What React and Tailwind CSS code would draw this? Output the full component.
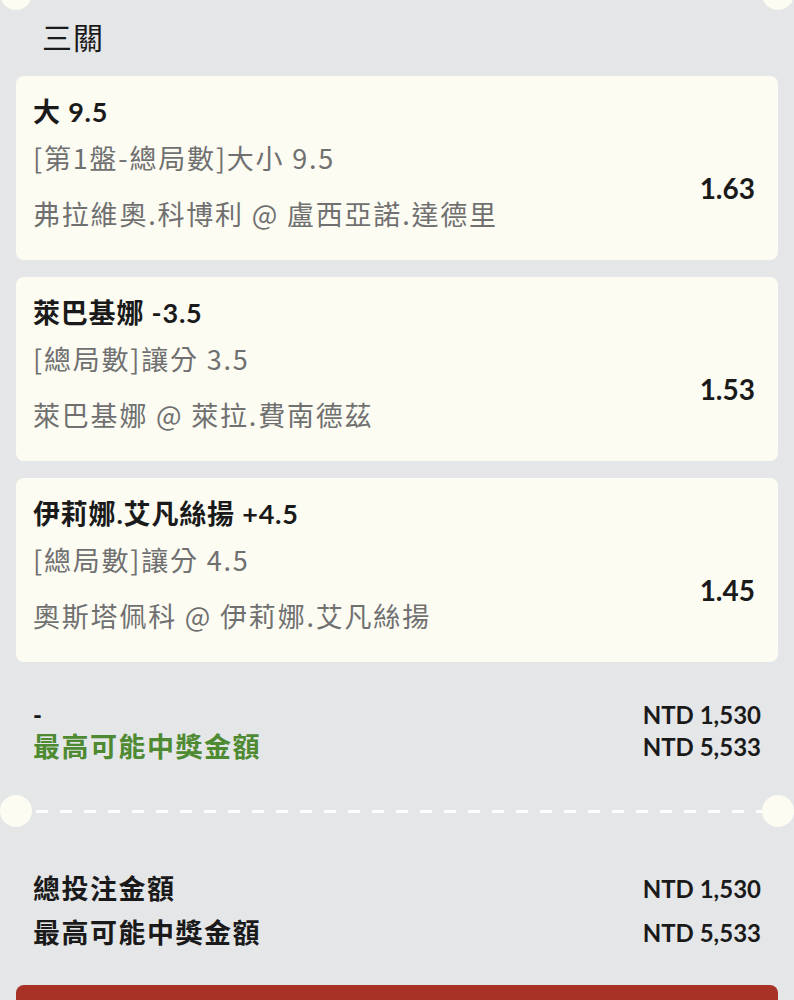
import React from 'react';

const bets = [
  { title: '大 9.5', market: '[第1盤-總局數]大小 9.5', match: '弗拉維奧.科博利 @ 盧西亞諾.達德里', odds: '1.63' },
  { title: '萊巴基娜 -3.5', market: '[總局數]讓分 3.5', match: '萊巴基娜 @ 萊拉.費南德茲', odds: '1.53' },
  { title: '伊莉娜.艾凡絲揚 +4.5', market: '[總局數]讓分 4.5', match: '奧斯塔佩科 @ 伊莉娜.艾凡絲揚', odds: '1.45' },
];

const Divider = ({ className = '' }) => (
  <div className={`flex items-center h-8 ${className}`}>
    <div className="w-8 h-8 rounded-full bg-[#fcfcf3] shrink-0" />
    <div className="flex-1 ml-1 h-[3px] bg-[repeating-linear-gradient(to_right,#ffffff_0_12px,transparent_12px_24px)]" />
    <div className="w-8 h-8 rounded-full bg-[#fcfcf3] shrink-0" />
  </div>
);

export default function App() {
  return (
    <div className="w-[794px] h-[1000px] overflow-hidden bg-[#e5e6e8] text-[#1a1a1a] font-['Lato','Noto_Sans_CJK_TC',sans-serif]">
      <Divider className="-mt-[22px]" />

      <h2 className="pl-[42px] mt-[9px] text-[30px] leading-[36px] font-normal tracking-[1px]">三關</h2>

      {/* Bet cards */}
      <div className="mt-[21px] px-4 flex flex-col gap-[17px]">
        {bets.map((b) => (
          <div key={b.title} className="h-[184px] rounded-lg bg-[#fcfcf3] pl-[17px] pr-[23px] pt-[20px] flex justify-between">
            <div className="flex flex-col">
              <div className="text-[27px] leading-[32px] font-bold tracking-[0.8px]">{b.title}</div>
              <div className="mt-[14px] text-[27px] leading-[32px] text-[#707070] tracking-[1.8px] font-['Noto_Sans_CJK_TC',sans-serif]">{b.market}</div>
              <div className="mt-[24px] text-[27px] leading-[32px] text-[#707070] tracking-[1.8px] font-['Noto_Sans_CJK_TC',sans-serif]">{b.match}</div>
            </div>
            <div className="mt-[74px] text-[28px] leading-[36px] font-bold">{b.odds}</div>
          </div>
        ))}
      </div>

      {/* Selection summary */}
      <div className="mt-[37px] px-[33px] flex justify-between">
        <div className="flex flex-col">
          <span className="text-[24px] leading-[32px] font-black">-</span>
          <span className="text-[27px] leading-[32px] font-bold text-[#4e8a32] tracking-[1.5px]">最高可能中獎金額</span>
        </div>
        <div className="flex flex-col items-end text-[24px] leading-[32px] font-bold">
          <span>NTD 1,530</span>
          <span>NTD 5,533</span>
        </div>
      </div>

      <Divider className="mt-[32px]" />

      {/* Totals */}
      <div className="mt-[46px] px-[33px] flex flex-col gap-[12px] font-bold">
        <div className="flex justify-between items-center">
          <span className="text-[27px] leading-[32px] tracking-[1.5px]">總投注金額</span>
          <span className="text-[24px] leading-[32px]">NTD 1,530</span>
        </div>
        <div className="flex justify-between items-center">
          <span className="text-[27px] leading-[32px] tracking-[1.5px]">最高可能中獎金額</span>
          <span className="text-[24px] leading-[32px]">NTD 5,533</span>
        </div>
      </div>

      <div className="mt-[36px] mx-4 h-16 rounded-t-lg bg-[#a83226]" />
    </div>
  );
}
